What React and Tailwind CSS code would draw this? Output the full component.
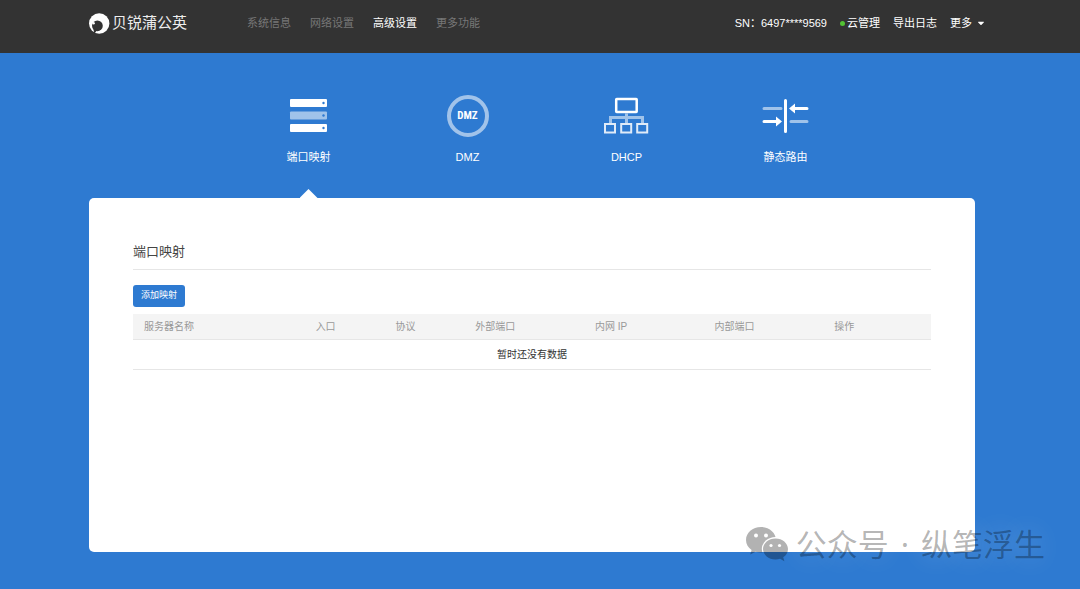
import { FaCaretDown } from "react-icons/fa";

const navItems = [
  { href: "#system", label: "系统信息" },
  { href: "#network", label: "网络设置" },
  { href: "#advanced", label: "高级设置", active: true },
  { href: "#features", label: "更多功能" },
];

const tabs = [
  { href: "#port", label: "端口映射", icon: <PortIcon />, active: true },
  { href: "#dmz", label: "DMZ", icon: <DmzIcon /> },
  { href: "#dhcp", label: "DHCP", icon: <DhcpIcon /> },
  { href: "#route", label: "静态路由", icon: <RouteIcon /> },
];

const columns = [
  { label: "服务器名称", width: "" },
  { label: "入口", width: "w-[10%]" },
  { label: "协议", width: "w-[10%]" },
  { label: "外部端口", width: "w-[15%]" },
  { label: "内网 IP", width: "w-[15%]" },
  { label: "内部端口", width: "w-[15%]" },
  { label: "操作", width: "w-[13.5%]" },
];

export default function App() {
  return (
    <div className="relative min-h-screen overflow-hidden bg-[#2e7ad1] pb-9 font-['Liberation_Sans','Noto_Sans_CJK_SC',sans-serif]">
      <Header />
      <main className="pr-4">
        <div className="mx-auto max-w-[886px]">
          <Tabs />
          <section className="min-h-[354px] rounded-[5px] bg-white px-11 pt-11">
            <h1 className="border-b border-[#e6e6e6] pb-[7px] text-[13px] leading-5 text-[#444]">
              端口映射
            </h1>
            <button
              type="button"
              className="mt-[15px] block h-[22px] rounded-[3px] bg-[#2e7ad1] px-2 text-[9px] text-white"
            >
              添加映射
            </button>
            <PortTable />
          </section>
        </div>
      </main>
      <Watermark />
    </div>
  );
}

function Header() {
  return (
    <header className="bg-[#333] pr-4">
      <div className="mx-auto flex h-[53px] max-w-[886px] items-center pb-[7px] text-[11px] leading-5">
        <a href="#home" className="flex items-center gap-[2px] text-[15px] text-[#eee]">
          <Logo />
          贝锐蒲公英
        </a>
        <nav className="ml-[60px] flex gap-[19px]">
          {navItems.map((item) => (
            <a
              key={item.href}
              href={item.href}
              className={item.active ? "text-white" : "text-[#777]"}
            >
              {item.label}
            </a>
          ))}
        </nav>
        <div className="-mr-[11px] ml-auto flex items-center gap-[13px] text-white">
          <span>SN：6497****9569</span>
          <a href="#cloud" className="flex items-center gap-[2px]">
            <span className="size-[5px] rounded-full bg-[#52c234]" />
            云管理
          </a>
          <a href="#logs">导出日志</a>
          <button type="button" className="flex items-center gap-1">
            更多
            <FaCaretDown size={10} />
          </button>
        </div>
      </div>
    </header>
  );
}

function Tabs() {
  return (
    <nav className="ml-[140px] grid w-[636px] grid-cols-4">
      {tabs.map((tab) => (
        <a
          key={tab.href}
          href={tab.href}
          className="relative flex flex-col items-center pt-[42px] pb-[31px] text-[11px] leading-5 text-white"
        >
          {tab.icon}
          <span className="mt-[10px]">{tab.label}</span>
          {tab.active && (
            <span className="absolute bottom-0 left-1/2 h-[9px] w-[18px] -translate-x-1/2 bg-white [clip-path:polygon(50%_0,100%_100%,0_100%)]" />
          )}
        </a>
      ))}
    </nav>
  );
}

function PortTable() {
  return (
    <table className="mt-[7px] w-full table-fixed text-[10px]">
      <thead>
        <tr className="h-[25px] border-b border-[#e6e6e6] bg-[#f4f4f4] text-left text-[#999]">
          {columns.map((col) => (
            <th key={col.label} className={`${col.width} pl-[11px] font-normal`}>
              {col.label}
            </th>
          ))}
        </tr>
      </thead>
      <tbody>
        <tr className="h-[30px] border-b border-[#e6e6e6] text-center text-[#333]">
          <td colSpan={columns.length}>暂时还没有数据</td>
        </tr>
      </tbody>
    </table>
  );
}

function Watermark() {
  return (
    <div className="pointer-events-none absolute right-[35px] bottom-6 flex items-center gap-3 font-['Noto_Sans','Noto_Sans_CJK_SC',sans-serif] text-[31px] leading-[42px] text-black/30 [text-shadow:0_0_24px_rgba(255,255,255,0.25)]">
      <span className="flex items-center gap-2">
        <ChatIcon />
        公众号
      </span>
      <span>·</span>
      <span>纵笔浮生</span>
    </div>
  );
}

function Logo() {
  return (
    <svg width="21" height="21" viewBox="0 0 21 21">
      <circle cx="10.2" cy="10.5" r="10.2" fill="#fff" />
      <circle cx="8.4" cy="12.8" r="5.4" fill="#333" />
      <path d="M4.4 15.5 L5.2 21 L8.2 17 Z" fill="#333" />
      <circle cx="4.600" cy="10.200" r="1.200" fill="#fff" />
    </svg>
  );
}

function ChatIcon() {
  return (
    <svg width="42" height="35" viewBox="0 0 42 35" fill="currentColor">
      <mask id="rear">
        <rect width="42" height="35" fill="#fff" />
        <circle cx="10" cy="8.5" r="2" fill="#000" />
        <circle cx="20" cy="8.5" r="2" fill="#000" />
        <ellipse cx="29.5" cy="22" rx="13.7" ry="12" fill="#000" />
      </mask>
      <mask id="front">
        <rect width="42" height="35" fill="#fff" />
        <circle cx="25" cy="18.5" r="1.6" fill="#000" />
        <circle cx="33.5" cy="18.5" r="1.6" fill="#000" />
      </mask>
      <path
        mask="url(#rear)"
        d="M15 0C6.5 0 0 5.7 0 13c0 4.2 2.2 7.7 5.6 10L4.2 27.5l5.300-2.700c1.800.5 3.600.8 5.500.8 8.300 0 15-5.600 15-12.600S23.300 0 15 0z"
      />
      <path
        mask="url(#front)"
        d="M29.5 11.5C22.6 11.5 17 16.2 17 22s5.600 10.500 12.500 10.500c1.600 0 3.200-.3 4.600-.7l4.300 2.400-1.200-3.900C40.200 28.400 42 25.400 42 22c0-5.800-5.600-10.500-12.500-10.500z"
      />
    </svg>
  );
}

function PortIcon() {
  return (
    <svg width="42" height="42" viewBox="0 0 42 42" fill="#fff">
      <rect x="2" y="4" width="37" height="8" rx="1" />
      <rect x="2" y="16.5" width="37" height="8" rx="1" fillOpacity="0.55" />
      <rect x="2" y="29" width="37" height="8" rx="1" />
      <g fill="#2e7ad1">
        <circle cx="35.500" cy="8" r="1.2" />
        <circle cx="35.500" cy="20.5" r="1.2" />
        <circle cx="35.500" cy="33" r="1.2" />
      </g>
    </svg>
  );
}

function DmzIcon() {
  return (
    <span className="flex size-[42px] items-center justify-center rounded-full border-4 border-white/55 font-['Roboto_Condensed','Roboto',sans-serif] text-[11px] font-bold">
      DMZ
    </span>
  );
}

function DhcpIcon() {
  return (
    <svg width="46" height="42" viewBox="0 0 46 42" fill="none" stroke="#fff">
      <path d="M6.5 28v-5.5h32V28M22.5 18.5v9.500" strokeWidth="3" strokeOpacity="0.55" />
      <rect x="12.2" y="4" width="20.5" height="13" rx="0.5" strokeWidth="2.5" />
      <g strokeWidth="2" strokeOpacity="0.85">
        <rect x="1" y="29" width="10" height="8.5" />
        <rect x="17.2" y="29" width="10" height="8.5" />
        <rect x="33.2" y="29" width="10" height="8.5" />
      </g>
    </svg>
  );
}

function RouteIcon() {
  return (
    <svg width="48" height="42" viewBox="0 0 48 42" fill="none" stroke="#fff" strokeWidth="3" strokeLinecap="round">
      <path d="M2 13.5h17M29 26.5h16" strokeOpacity="0.55" />
      <path d="M23.5 5.5v31M31 13.5h14M2 26.5h14" />
      <path d="M27 13.5l6-5v10zM20 26.5l-6-5v10z" fill="#fff" stroke="none" />
    </svg>
  );
}
